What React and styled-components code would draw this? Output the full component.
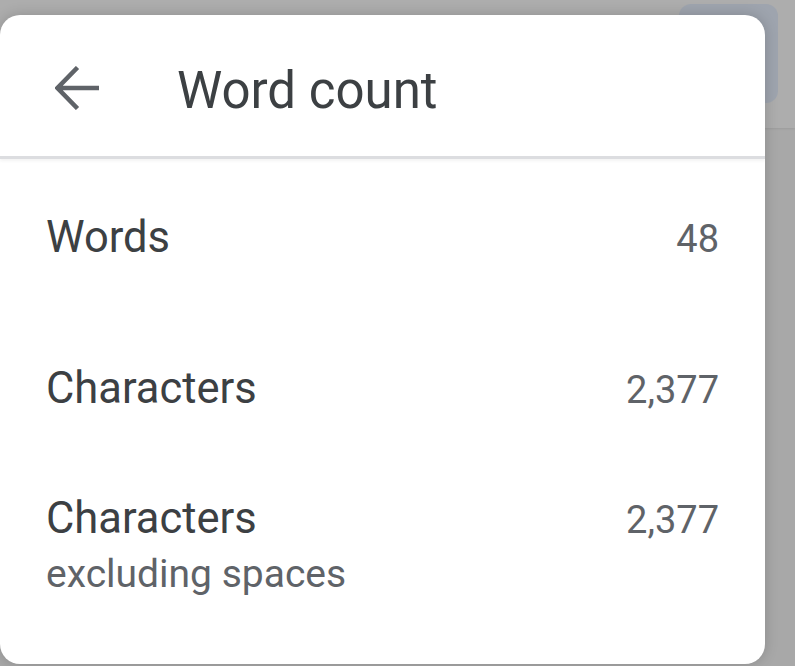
import styled, { createGlobalStyle } from "styled-components";

const GlobalStyle = createGlobalStyle`
  html, body {
    margin: 0;
    padding: 0;
    background: #a8a8a8;
  }
  body {
    font-family: Roboto, "Liberation Sans", sans-serif;
    -webkit-font-smoothing: antialiased;
  }
`;

const Screen = styled.div`
  position: relative;
  width: 795px;
  height: 666px;
  overflow: hidden;
  background: #a8a8a8;
`;

const AppBar = styled.div`
  height: 128px;
  box-sizing: border-box;
  display: flex;
  justify-content: flex-end;
  padding: 4px 17px 0 0;
  background: #adadad;
  box-shadow: 0 1px 2px rgba(0, 0, 0, 0.08);
`;

const AppButton = styled.div`
  width: 99px;
  height: 99px;
  border-radius: 12px;
  background: #9ea4ae;
`;

const Dialog = styled.div`
  position: absolute;
  left: 0;
  top: 15px;
  width: 765px;
  height: 649px;
  background: #ffffff;
  border-radius: 20px;
  box-shadow: 0 0 14px rgba(0, 0, 0, 0.18);
  overflow: hidden;
`;

const Header = styled.div`
  height: 144px;
  box-sizing: border-box;
  display: flex;
  align-items: center;
  padding: 4px 0 0 55px;
  border-bottom: 3px solid #dcdde0;
  box-shadow: 0 2px 3px rgba(0, 0, 0, 0.05);
`;

const BackButton = styled.button`
  width: 44px;
  height: 44px;
  padding: 0;
  border: 0;
  background: none;
  display: flex;
  color: #5f6368;
`;

const Title = styled.h1`
  margin: 6px 0 0 78px;
  font-size: 51px;
  font-weight: 400;
  line-height: 60px;
  color: #3c4043;
`;

const Body = styled.div`
  padding: 53px 46px 0 46px;
`;

const Row = styled.div`
  display: flex;
  justify-content: space-between;
  align-items: baseline;
  margin-bottom: ${(p) => p.$space || 0}px;
`;

const Label = styled.div`
  font-size: 43.5px;
  line-height: 52px;
  color: #3c4043;
`;

const SubLabel = styled.div`
  font-size: 39px;
  line-height: 58px;
  color: #5f6368;
`;

const Value = styled.div`
  font-size: 38px;
  line-height: 52px;
  color: #5f6368;
`;

function ArrowBack() {
  return (
    <svg width="44" height="44" viewBox="0 0 44 44" fill="none">
      <path
        d="M44 22H3M22.5 1.5L2.5 22l20 20.5"
        stroke="currentColor"
        strokeWidth="4.5"
      />
    </svg>
  );
}

const stats = [
  { label: "Words", value: "48", space: 98 },
  { label: "Characters", value: "2,377", space: 77 },
  { label: "Characters", sub: "excluding spaces", value: "2,377" },
];

export default function App() {
  return (
    <>
      <GlobalStyle />
      <Screen>
        <AppBar>
          <AppButton />
        </AppBar>
        <Dialog>
          <Header>
            <BackButton aria-label="Back">
              <ArrowBack />
            </BackButton>
            <Title>Word count</Title>
          </Header>
          <Body>
            {stats.map((s, i) => (
              <Row key={i} $space={s.space}>
                <div>
                  <Label>{s.label}</Label>
                  {s.sub && <SubLabel>{s.sub}</SubLabel>}
                </div>
                <Value>{s.value}</Value>
              </Row>
            ))}
          </Body>
        </Dialog>
      </Screen>
    </>
  );
}
